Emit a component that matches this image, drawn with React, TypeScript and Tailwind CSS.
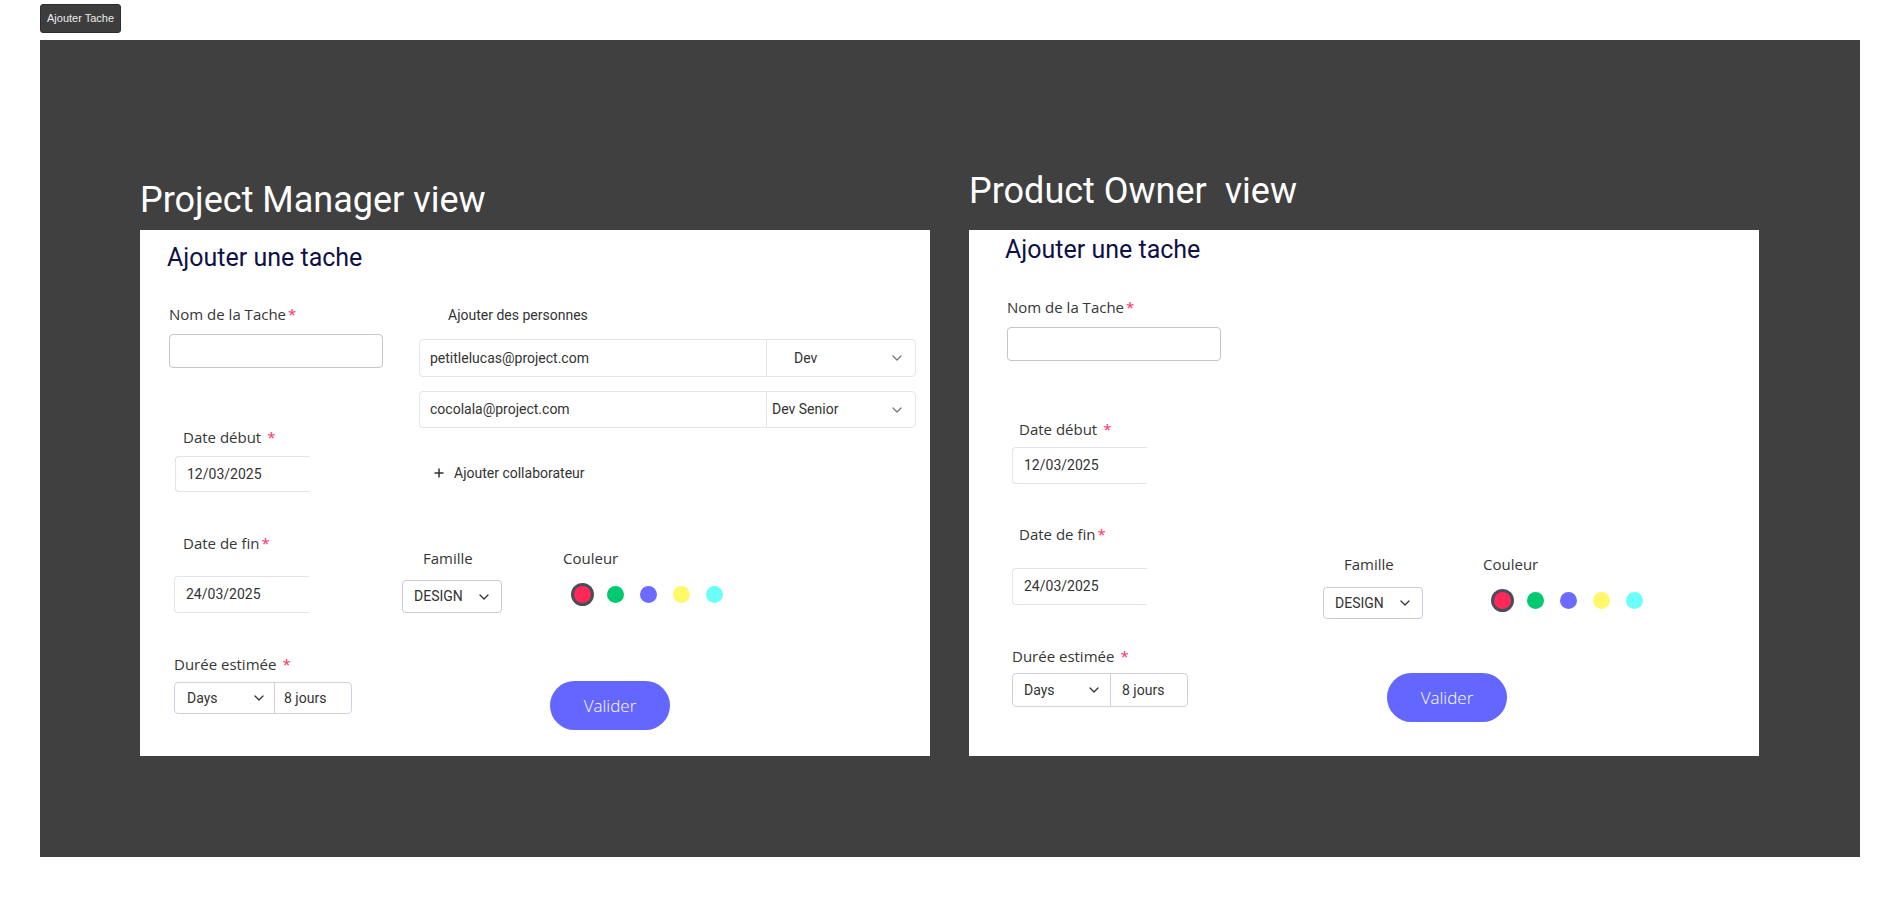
import React from 'react';

const roboto = "font-['Roboto',sans-serif]";
const poppins = "font-['Open_Sans',sans-serif]";

const colors = ['bg-[#00c970]', 'bg-[#6b6bff]', 'bg-[#fff96a]', 'bg-[#6bfff9]'];

function Chevron({ className = '' }: { className?: string }) {
  return (
    <svg width="10" height="6" viewBox="0 0 10 6" fill="none" className={className}>
      <path d="M1 1l4 4 4-4" stroke="currentColor" strokeWidth="1.3" strokeLinecap="round" strokeLinejoin="round" />
    </svg>
  );
}

function Star({ tight }: { tight?: boolean }) {
  return <span className={`text-[#ff2d6b] ${tight ? 'ml-[2px]' : 'ml-[6px]'}`}>*</span>;
}

function Label({ children, className = '' }: { children: React.ReactNode; className?: string }) {
  return <div className={`${poppins} text-[15px] leading-[20px] text-[#363636] whitespace-nowrap ${className}`}>{children}</div>;
}

function DateBox({ value, className = '' }: { value: string; className?: string }) {
  return (
    <div className={`${roboto} w-[135px] border border-r-0 border-[#e3e3ee] rounded-l-[4px] flex items-center pl-[11px] text-[14px] text-[#333] ${className}`}>
      {value}
    </div>
  );
}

function Duration({ className = '', left, right }: { className?: string; left: string; right: string }) {
  return (
    <div className={`${roboto} flex border border-[#cfd1e3] rounded-[4px] text-[14px] text-[#333] ${className}`}>
      <div className={`${left} flex items-center justify-between border-r border-[#cfd1e3]`}>
        Days <Chevron className="text-[#333]" />
      </div>
      <div className={`${right} flex items-center`}>8 jours</div>
    </div>
  );
}

function FamilyColor({ labelGap, dotsTop, selectTop, selectH, colGap }: { labelGap: string; dotsTop: string; selectTop: string; selectH: string; colGap: string }) {
  return (
    <div className="flex items-start">
      <div className="flex flex-col items-start">
        <Label className={labelGap}>Famille</Label>
        <div className={`${roboto} ${selectTop} ${selectH} w-[100px] border border-[#c9cce0] rounded-[4px] flex items-center justify-between pl-[11px] pr-[12px] text-[14px] text-[#333]`}>
          DESIGN <Chevron className="text-[#333]" />
        </div>
      </div>
      <div className={`flex flex-col items-start ${colGap}`}>
        <Label>Couleur</Label>
        <div className={`flex items-center gap-[16px] ml-[11px] ${dotsTop}`}>
          <span className="w-[17px] h-[17px] rounded-full bg-[#ff2857] ring-[3px] ring-[#4a4e5b]" />
          {colors.map(c => (
            <span key={c} className={`w-[17px] h-[17px] rounded-full ${c}`} />
          ))}
        </div>
      </div>
    </div>
  );
}

function Valider({ className = '' }: { className?: string }) {
  return (
    <button className={`${poppins} font-light h-[49px] w-[120px] rounded-full bg-[#6366ff] text-white text-[17px] ${className}`}>
      Valider
    </button>
  );
}

function PersonRow({ email, role, rolePad, h }: { email: string; role: string; rolePad: string; h: string }) {
  return (
    <div className={`${roboto} flex w-[497px] ${h} border border-[#e4e4ea] rounded-[4px] text-[14px] text-[#333]`}>
      <div className="w-[347px] border-r border-[#e4e4ea] flex items-center pl-[10px]">{email}</div>
      <div className={`flex-1 flex items-center justify-between ${rolePad} pr-[13px]`}>
        {role} <Chevron className="text-[#777]" />
      </div>
    </div>
  );
}

function ManagerCard() {
  return (
    <div className="w-[790px] h-[526px] bg-white pt-[13px]">
      <h2 className={`${roboto} ml-[27px] text-[25px] leading-[30px] text-[#0f1045]`}>Ajouter une tache</h2>
      <div className="flex">
        <div className="w-[262px] shrink-0 flex flex-col items-start">
          <Label className="ml-[29px] mt-[31px]">Nom de la Tache<Star tight /></Label>
          <div className="ml-[29px] mt-[10px] w-[214px] h-[34px] border border-[#c4c4cc] rounded-[4px]" />
          <Label className="ml-[43px] mt-[59px]">Date début<Star /></Label>
          <DateBox value="12/03/2025" className="ml-[35px] mt-[9px] h-[36px]" />
          <Label className="ml-[43px] mt-[41px]">Date de fin<Star tight /></Label>
          <DateBox value="24/03/2025" className="ml-[34px] mt-[23px] h-[37px]" />
          <Label className="ml-[34px] mt-[41px]">Durée estimée<Star /></Label>
          <Duration className="ml-[34px] mt-[8px] w-[178px] h-[32px]" left="w-[100px] pl-[12px] pr-[10px]" right="pl-[9px]" />
        </div>
        <div className="flex flex-col items-start">
          <div className={`${roboto} ml-[46px] mt-[32px] text-[14px] leading-[20px] text-[#333]`}>Ajouter des personnes</div>
          <div className="ml-[17px] mt-[14px]">
            <PersonRow email="petitlelucas@project.com" role="Dev" rolePad="pl-[27px]" h="h-[38px]" />
          </div>
          <div className="ml-[17px] mt-[14px]">
            <PersonRow email="cocolala@project.com" role="Dev Senior" rolePad="pl-[5px]" h="h-[37px]" />
          </div>
          <div className={`${roboto} ml-[32px] mt-[35px] flex items-center gap-[10px] text-[14px] leading-[20px] text-[#333]`}>
            <svg width="10" height="10" viewBox="0 0 10 10" fill="none">
              <path d="M5 0.5v9M0.5 5h9" stroke="#333" strokeWidth="1.5" />
            </svg>
            Ajouter collaborateur
          </div>
          <div className="mt-[65px]">
            <FamilyColor labelGap="ml-[21px]" selectTop="mt-[12px]" selectH="h-[33px]" dotsTop="mt-[18px]" colGap="ml-[61px]" />
          </div>
          <Valider className="ml-[148px] mt-[68px]" />
        </div>
      </div>
    </div>
  );
}

function OwnerCard() {
  return (
    <div className="w-[790px] h-[526px] bg-white pt-[5px]">
      <h2 className={`${roboto} ml-[36px] text-[25px] leading-[30px] text-[#0f1045]`}>Ajouter une tache</h2>
      <div className="flex">
        <div className="w-[354px] shrink-0 flex flex-col items-start">
          <Label className="ml-[38px] mt-[32px]">Nom de la Tache<Star tight /></Label>
          <div className="ml-[38px] mt-[10px] w-[214px] h-[34px] border border-[#c4c4cc] rounded-[4px]" />
          <Label className="ml-[50px] mt-[58px]">Date début<Star /></Label>
          <DateBox value="12/03/2025" className="ml-[43px] mt-[8px] h-[37px]" />
          <Label className="ml-[50px] mt-[40px]">Date de fin<Star tight /></Label>
          <DateBox value="24/03/2025" className="ml-[43px] mt-[24px] h-[37px]" />
          <Label className="ml-[43px] mt-[41px]">Durée estimée<Star /></Label>
          <Duration className="ml-[43px] mt-[7px] w-[176px] h-[34px]" left="w-[98px] pl-[11px] pr-[11px]" right="pl-[11px]" />
        </div>
        <div className="flex flex-col items-start">
          <div className="mt-[289px]">
            <FamilyColor labelGap="ml-[21px]" selectTop="mt-[13px]" selectH="h-[32px]" dotsTop="mt-[18px]" colGap="ml-[60px]" />
          </div>
          <Valider className="ml-[64px] mt-[54px]" />
        </div>
      </div>
    </div>
  );
}

export default function App() {
  return (
    <div className="min-h-screen bg-white px-[40px] pt-[4px]">
      <button className="font-['Liberation_Sans',Arial,sans-serif] h-[29px] px-[6px] mb-[7px] rounded-[3px] bg-[#3d3d3d] border border-[#2e2e2e] text-[11px] text-[#ececec]">
        Ajouter Tache
      </button>
      <div className="h-[817px] bg-[#404040] pl-[100px] pt-[130px] flex gap-[39px]">
        <div className="flex flex-col">
          <h1 className={`${roboto} mt-[9px] mb-[9px] text-[36px] leading-[42px] text-white`}>Project Manager view</h1>
          <ManagerCard />
        </div>
        <div className="flex flex-col">
          <h1 className={`${roboto} mb-[18px] text-[36px] leading-[42px] text-white whitespace-pre`}>Product Owner  view</h1>
          <OwnerCard />
        </div>
      </div>
    </div>
  );
}
